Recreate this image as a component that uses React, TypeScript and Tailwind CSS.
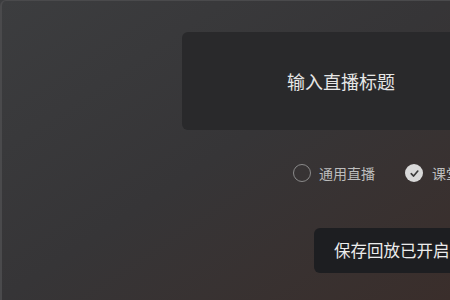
import React from "react";

export default function App() {
  return (
    <div
      className="relative w-[450px] h-[300px] overflow-hidden bg-gradient-to-br from-[#3c3d3f] via-[#363537] to-[#3a2e2b]"
      style={{ fontFamily: '"Noto Sans CJK SC", "Noto Sans", sans-serif' }}
    >
      <div className="absolute inset-0 border-l-2 border-t border-[#4a4a4c] rounded-tl-[6px] pointer-events-none" />
      <div className="flex flex-col items-start pl-[182px] pt-[32px] w-[700px]">
        <div className="w-[318px] h-[98px] rounded-[6px] bg-[#29292b] flex items-center justify-center">
          <span className="text-[18px] leading-none text-[#e6e6e6]">输入直播标题</span>
        </div>
        <div className="flex items-center mt-[34px] pl-[111px] h-[18px]">
          <div className="flex items-center gap-[8px]">
            <span className="w-[18px] h-[18px] rounded-full border-[1.5px] border-[#8a8a8a] box-border" />
            <span className="text-[14px] leading-none text-[#bdbdbd] whitespace-nowrap">通用直播</span>
          </div>
          <div className="flex items-center gap-[9px] ml-[30px]">
            <span className="w-[18px] h-[18px] rounded-full bg-[#d9d9d9] flex items-center justify-center">
              <svg width="11" height="11" viewBox="0 0 10 10" fill="none">
                <path d="M2 5.2 L4.2 7.3 L8 2.8" stroke="#3a3a3a" strokeWidth="1.5" strokeLinecap="round" strokeLinejoin="round" />
              </svg>
            </span>
            <span className="text-[14px] leading-none text-[#bdbdbd] whitespace-nowrap">课堂直播</span>
          </div>
        </div>
        <div className="mt-[46px] ml-[132px] h-[45px] rounded-[6px] bg-[#1d1e21] flex items-center px-[20px]">
          <span className="text-[16.5px] leading-none text-[#ececec] whitespace-nowrap">保存回放已开启</span>
        </div>
      </div>
    </div>
  );
}
